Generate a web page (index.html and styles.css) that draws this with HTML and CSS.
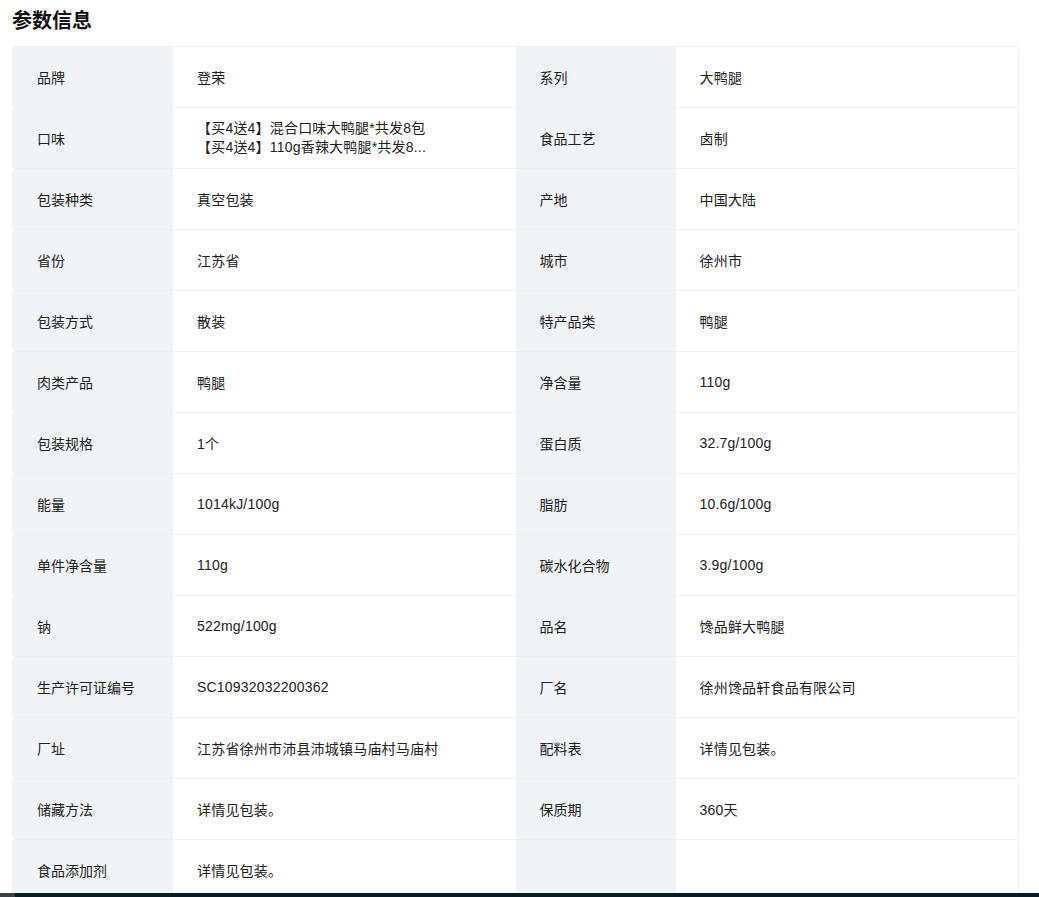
FILE: index.html
```html
<!DOCTYPE html>
<html lang="zh-CN">
<head>
<meta charset="utf-8">
<title>参数信息</title>
<link rel="stylesheet" href="styles.css">
</head>
<body>
<div class="page">
  <h2 class="title">参数信息</h2>
  <div class="table">
    <div class="row"><div class="cell"><div class="label">品牌</div><div class="value">登荣</div></div><div class="cell"><div class="label">系列</div><div class="value">大鸭腿</div></div></div>
    <div class="row"><div class="cell"><div class="label">口味</div><div class="value multi"><span>【买4送4】混合口味大鸭腿*共发8包</span><span>【买4送4】110g香辣大鸭腿*共发8...</span></div></div><div class="cell"><div class="label">食品工艺</div><div class="value">卤制</div></div></div>
    <div class="row"><div class="cell"><div class="label">包装种类</div><div class="value">真空包装</div></div><div class="cell"><div class="label">产地</div><div class="value">中国大陆</div></div></div>
    <div class="row"><div class="cell"><div class="label">省份</div><div class="value">江苏省</div></div><div class="cell"><div class="label">城市</div><div class="value">徐州市</div></div></div>
    <div class="row"><div class="cell"><div class="label">包装方式</div><div class="value">散装</div></div><div class="cell"><div class="label">特产品类</div><div class="value">鸭腿</div></div></div>
    <div class="row"><div class="cell"><div class="label">肉类产品</div><div class="value">鸭腿</div></div><div class="cell"><div class="label">净含量</div><div class="value">110g</div></div></div>
    <div class="row"><div class="cell"><div class="label">包装规格</div><div class="value">1个</div></div><div class="cell"><div class="label">蛋白质</div><div class="value">32.7g/100g</div></div></div>
    <div class="row"><div class="cell"><div class="label">能量</div><div class="value">1014kJ/100g</div></div><div class="cell"><div class="label">脂肪</div><div class="value">10.6g/100g</div></div></div>
    <div class="row"><div class="cell"><div class="label">单件净含量</div><div class="value">110g</div></div><div class="cell"><div class="label">碳水化合物</div><div class="value">3.9g/100g</div></div></div>
    <div class="row"><div class="cell"><div class="label">钠</div><div class="value">522mg/100g</div></div><div class="cell"><div class="label">品名</div><div class="value">馋品鲜大鸭腿</div></div></div>
    <div class="row"><div class="cell"><div class="label">生产许可证编号</div><div class="value">SC10932032200362</div></div><div class="cell"><div class="label">厂名</div><div class="value">徐州馋品轩食品有限公司</div></div></div>
    <div class="row"><div class="cell"><div class="label">厂址</div><div class="value">江苏省徐州市沛县沛城镇马庙村马庙村</div></div><div class="cell"><div class="label">配料表</div><div class="value">详情见包装。</div></div></div>
    <div class="row"><div class="cell"><div class="label">储藏方法</div><div class="value">详情见包装。</div></div><div class="cell"><div class="label">保质期</div><div class="value">360天</div></div></div>
    <div class="row"><div class="cell"><div class="label">食品添加剂</div><div class="value">详情见包装。</div></div><div class="cell"><div class="label"></div><div class="value"></div></div></div>
  </div>
</div>
<div class="bottom-bar"><div class="bar-left"></div><div class="bar-main"></div></div>
</body>
</html>
```
FILE: styles.css
```css
* { box-sizing: border-box; }
html, body { margin: 0; padding: 0; background: #fff; }
body {
  font-family: "Liberation Sans", "Noto Sans CJK SC", sans-serif;
  color: #222;
  font-size: 14px;
  overflow: hidden;
}
.page { padding: 8px 20px 0 12px; }
.title {
  margin: 0 0 14px;
  font-size: 20px;
  line-height: 24px;
  font-weight: 700;
  color: #111;
  font-family: "Noto Sans CJK SC", sans-serif;
}
.table { display: flex; flex-direction: column; }
.row {
  display: flex;
  height: 62px;
  border: 1px solid #eef0f2;
  border-radius: 4px;
  margin-top: -1px;
  overflow: hidden;
}
.row:first-child { margin-top: 0; }
.cell { display: flex; flex: 1; min-width: 0; }
.label {
  width: 160px;
  flex: none;
  background: #f1f4f7;
  padding-left: 24px;
  display: flex;
  align-items: center;
}
.value {
  flex: 1;
  padding-left: 24px;
  display: flex;
  align-items: center;
  background: #fff;
  letter-spacing: 0.2px;
}
.value.multi { flex-direction: column; align-items: flex-start; justify-content: center; line-height: 19px; }
.bottom-bar {
  position: fixed;
  left: 0;
  right: 0;
  bottom: 0;
  height: 4px;
  display: flex;
}
.bar-left { width: 15px; background: #3a4148; }
.bar-main { flex: 1; background: #0b1b24; }
```
